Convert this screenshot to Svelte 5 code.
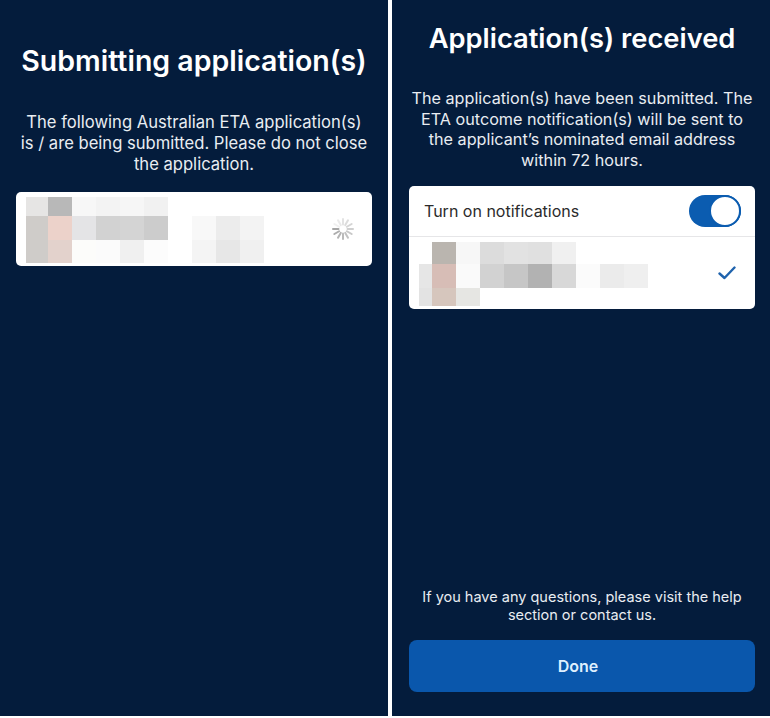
<script>
  const leftCols = '22px repeat(5, 24px) 24px 24px 24px 24px';
  const leftRows = '19px 24px 23px';
  const left = [
    ['#e6e5e4','#b8b8b8','#f7f7f7','#f3f3f3','#f6f6f6','#f1f1f1','#fff','#fff','#fff','#fff'],
    ['#cfccc9','#ecd2ca','#e4e4e6','#d2d2d2','#d4d4d4','#cccccc','#fff','#f8f8f8','#ececec','#f3f3f3'],
    ['#cfccc9','#e3d2cc','#fcfcfa','#fbfbfb','#f0f0f0','#fcfcfc','#fff','#f4f4f4','#e7e7e7','#f0f0f0']
  ];
  const rightCols = '13px repeat(10, 24px)';
  const rightRows = '22px 24px 18px';
  const right = [
    ['#fff','#bab5af','#f7f7f7','#dcdcdc','#e2e2e2','#e0e0e0','#f0f0f0','#fff','#fff','#fff','#fff'],
    ['#e6e6e6','#d7bdb6','#fafafa','#d2d2d2','#c6c6c6','#b2b2b2','#d8d8d8','#fbfbfb','#ebebeb','#efefef','#fff'],
    ['#e3e3e3','#d6c6bd','#e6e6e3','#fff','#fff','#fff','#fff','#fff','#fff','#fff','#fff']
  ];
  const spokes = [0, 1, 2, 3, 4, 5, 6, 7, 8, 9, 10, 11];
</script>

<main class="screen">
  <section class="panel first">
    <h1 class="title-a">Submitting application(s)</h1>
    <p class="intro intro-a">The following Australian ETA application(s) is / are being submitted. Please do not close the application.</p>
    <div class="card pending">
      <div class="mosaic" style="grid-template-columns: {leftCols}; grid-template-rows: {leftRows}">
        {#each left.flat() as c}<i style="background: {c}"></i>{/each}
      </div>
      <svg class="spinner" width="24" height="24" viewBox="-12 -12 24 24" aria-hidden="true">
        {#each spokes as s}
          <line x1="0" y1="-4.5" x2="0" y2="-10" stroke="#777" stroke-width="2" stroke-linecap="round"
            opacity={0.1 + 0.05 * ((s + 2) % 12)} transform="rotate({s * 30})" />
        {/each}
      </svg>
    </div>
  </section>

  <section class="panel second">
    <h1 class="title-b">Application(s) received</h1>
    <p class="intro intro-b">The application(s) have been submitted. The ETA outcome notification(s) will be sent to the applicant’s nominated email address within 72 hours.</p>
    <div class="card done-card">
      <div class="notify">
        <span>Turn on notifications</span>
        <span class="toggle"><span class="knob"></span></span>
      </div>
      <div class="applicant">
        <div class="mosaic" style="grid-template-columns: {rightCols}; grid-template-rows: {rightRows}">
          {#each right.flat() as c}<i style="background: {c}"></i>{/each}
        </div>
        <svg class="check" width="18" height="14" viewBox="0 0 18 14" aria-hidden="true">
          <path d="M1.5 7.5 L6.5 12 L16.5 1.5" fill="none" stroke="#1f63ad" stroke-width="2.4" stroke-linecap="round" stroke-linejoin="round" />
        </svg>
      </div>
    </div>
    <div class="foot">
      <p class="help">If you have any questions, please visit the help section or contact us.</p>
      <button class="done" type="button">Done</button>
    </div>
  </section>
</main>

<style>
  :global(body) {
    margin: 0;
    background: #fff;
    font-family: Inter, "Liberation Sans", sans-serif;
  }
  .screen {
    display: flex;
    gap: 4px;
    width: 770px;
    height: 718px;
    padding-bottom: 2px;
    box-sizing: border-box;
  }
  .panel {
    background: #041c3c;
    color: #fff;
    box-sizing: border-box;
    display: flex;
    flex-direction: column;
  }
  .first {
    width: 388px;
    padding: 44px 16px 0;
  }
  .second {
    width: 378px;
    padding: 22px 15px 24px 17px;
  }
  h1 {
    margin: 0;
    line-height: 34px;
    font-weight: 600;
    text-align: center;
    white-space: nowrap;
  }
  .title-a {
    font-size: 28.5px;
  }
  .title-b {
    font-size: 27.3px;
  }
  .intro {
    margin: 0;
    font-size: 16.6px;
    line-height: 21px;
    font-weight: 400;
    text-align: center;
    color: #e9edf2;
  }
  .intro-a {
    margin-top: 34px;
    padding: 0 4px;
  }
  .intro-b {
    margin-top: 32px;
    font-size: 16.2px;
    line-height: 20.5px;
  }
  .card {
    background: #fff;
    border-radius: 5px;
    color: #222;
  }
  .pending {
    margin-top: 17px;
    height: 74px;
    padding: 5px 17px 0 10px;
    box-sizing: border-box;
    display: flex;
    align-items: flex-start;
    justify-content: space-between;
  }
  .mosaic {
    display: grid;
  }
  .spinner {
    margin-top: 20px;
  }
  .done-card {
    margin-top: 16px;
  }
  .notify {
    height: 50px;
    padding: 0 14px 0 15px;
    display: flex;
    align-items: center;
    justify-content: space-between;
    font-size: 16px;
    color: #2b2b2b;
    border-bottom: 1px solid #e6e6e8;
  }
  .toggle {
    width: 52px;
    height: 32px;
    border-radius: 16px;
    background: #0b5cb0;
    box-sizing: border-box;
    display: flex;
    justify-content: flex-end;
  }
  .knob {
    width: 32px;
    height: 32px;
    box-sizing: border-box;
    border: 2px solid #0b5cb0;
    border-radius: 50%;
    background: #fff;
  }
  .applicant {
    height: 72px;
    padding: 5px 19px 0 10px;
    box-sizing: border-box;
    display: flex;
    align-items: flex-start;
    justify-content: space-between;
  }
  .check {
    margin-top: 24px;
  }
  .foot {
    margin-top: auto;
  }
  .help {
    margin: 0 0 16px;
    font-size: 14.5px;
    line-height: 18px;
    text-align: center;
    color: #e9edf2;
  }
  .done {
    display: block;
    width: 100%;
    height: 52px;
    padding: 0 8px 0 0;
    border: 0;
    border-radius: 8px;
    background: #0a57ac;
    color: #dff0ff;
    font: 600 16px Inter, "Liberation Sans", sans-serif;
  }
</style>
